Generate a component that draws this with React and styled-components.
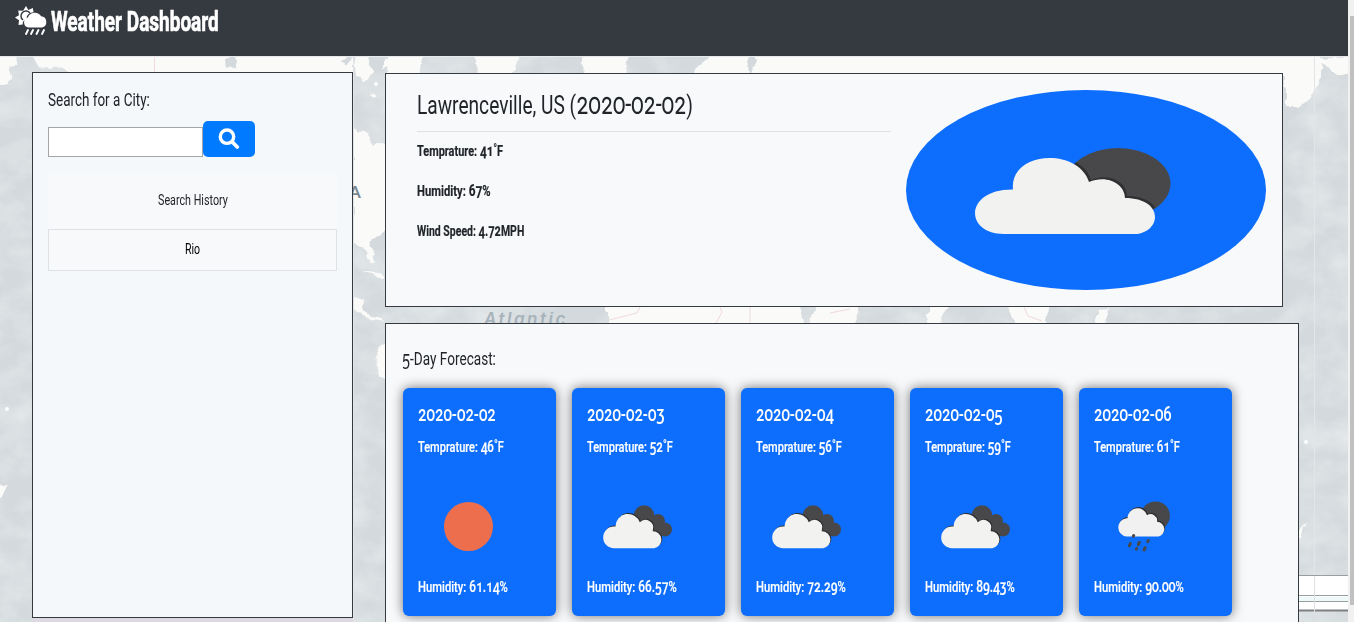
import React, { useLayoutEffect, useRef, useState } from "react";
import styled, { createGlobalStyle } from "styled-components";

const Global = createGlobalStyle`
  *, *::before, *::after { box-sizing: border-box; }
  html, body { margin: 0; height: 100%; overflow: hidden; }
  body { font-family: Roboto, "Liberation Sans", sans-serif; color: #212529; font-variant-numeric: oldstyle-nums; }
`;

const Page = styled.div`
  position: relative;
  height: 622px;
  display: flex;
  overflow: hidden;
  background: #d5dbde;
`;

const MapArt = styled.svg`
  position: absolute;
  left: 0;
  top: 56px;
  width: 1348px;
  height: 566px;
`;

const Content = styled.div`
  position: relative;
  width: 1348px;
  display: flex;
  flex-direction: column;
`;

const Header = styled.header`
  flex: none;
  height: 56px;
  background: #343a40;
  color: #fff;
  display: flex;
  align-items: flex-start;
  padding: 5px 0 0 15px;
  gap: 3px;
`;

const Columns = styled.main`
  display: flex;
  align-items: flex-start;
  gap: 32px;
  padding: 16px 0 0 32px;
`;

const Sidebar = styled.aside`
  width: 321px;
  height: 546px;
  border: 1px solid #343a40;
  background: #f4f8fb;
  padding: 15px;
`;

const SearchRow = styled.div`
  display: flex;
  align-items: flex-end;
  height: 36px;
  margin-top: 9px;
`;

const SearchInput = styled.input`
  width: 155px;
  height: 30px;
  border: 1px solid #a5a5a5;
  background: #fff;
  padding: 0 4px;
`;

const SearchButton = styled.button`
  width: 52px;
  height: 36px;
  border: 0;
  border-radius: 5px;
  background: #007bff;
  display: flex;
  align-items: center;
  justify-content: center;
  padding: 0;
`;

const History = styled.section`
  margin-top: 15px;
  background: #f8f9fb;
`;

const HistoryCell = styled.div`
  height: ${(p) => (p.$item ? 42 : 57)}px;
  border: ${(p) => (p.$item ? "1px solid #dee2e6" : "0")};
  color: ${(p) => (p.$item ? "#000" : "#212529")};
  display: flex;
  justify-content: center;
  padding-top: ${(p) => (p.$item ? 9 : 18)}px;
`;

const Main = styled.div`
  padding-top: 1px;
  display: flex;
  flex-direction: column;
  gap: 16px;
`;

const Current = styled.section`
  width: 898px;
  height: 234px;
  border: 1px solid #343a40;
  background: #f8f9fb;
  padding: 16px 16px 16px 31px;
  display: flex;
  gap: 15px;
`;

const Details = styled.div`
  width: 474px;
`;

const CityRow = styled.div`
  height: 42px;
  border-bottom: 1px solid #dfe1e4;
  margin-bottom: 7px;
`;

const Stat = styled.div`
  height: 40px;
`;

const Oval = styled.div`
  width: 360px;
  height: 200px;
  border-radius: 50%;
  background: #0d6efd;
`;

const Forecast = styled.section`
  width: 914px;
  height: 330px;
  border: 1px solid #343a40;
  background: #f8f9fb;
  padding: 23px 16px 0;
`;

const Cards = styled.div`
  display: flex;
  gap: 16px;
  margin: 17px 0 0 1px;
`;

const Card = styled.article`
  width: 153px;
  height: 228px;
  border-radius: 6px;
  background: #0d6efd;
  color: #fff;
  box-shadow: 0 0 12px rgba(0, 0, 0, 0.55);
  padding: 15px 15px;
`;

const CardIcon = styled.svg`
  display: block;
  width: 100px;
  height: 100px;
  margin: 8px 0 2px 1px;
`;

const Scrollbar = styled.div`
  width: 6px;
  background: #f1f1f1;
  overflow: hidden;
  padding: 16px 0 17px 2px;
`;

const Thumb = styled.div`
  height: 589px;
  background: #c1c1c1;
`;

const FitBox = styled.div`
  width: ${(p) => p.$w}px;
  height: ${(p) => p.$lh}px;
  line-height: ${(p) => p.$lh}px;
  font-size: ${(p) => p.$size}px;
  font-weight: ${(p) => p.$weight};
  -webkit-text-stroke: ${(p) => p.$stroke}px currentColor;
  white-space: nowrap;
`;

const FitInner = styled.span`
  display: inline-block;
  transform-origin: 0 50%;
`;

const Num = styled.span`
  font-size: ${(p) => p.$em || 1.06}em;
  line-height: 1px;
`;

/* Condenses a line of text horizontally to the given width. */
function Fit({ w, size, lh, weight = 400, stroke = 0, children }) {
  const ref = useRef(null);
  const [scale, setScale] = useState(1);
  useLayoutEffect(() => {
    const measure = () => setScale(w / ref.current.offsetWidth);
    measure();
    document.fonts?.ready.then(() => ref.current && measure());
  }, [w, size, weight]);
  return (
    <FitBox $w={w} $size={size} $lh={lh} $weight={weight} $stroke={stroke}>
      <FitInner ref={ref} style={{ transform: `scaleX(${scale})` }}>{children}</FitInner>
    </FitBox>
  );
}

const cloud = "M25.500 71.200a10.800 10.800 0 0 1 0-21.600h1.500a12.500 12.500 0 0 1 24.300-4.300 7.800 7.800 0 0 1 13 7.800v1.200a8.500 8.500 0 0 1 1.400 16.900z";

function WeatherIcon({ kind }) {
  if (kind === "sun") return <circle cx="49.500" cy="49.500" r="24.500" fill="#ec6e4c" />;
  if (kind === "rain")
    return (
      <g transform="translate(-2.500 -.5)">
        <circle cx="63" cy="39.300" r="14.400" fill="#48484a" />
        <path d="M34 59.500a9.200 9.200 0 0 1 0-18.300h1a10 10 0 0 1 19.500-3 6.500 6.500 0 0 1 10 6.500 7.500 7.500 0 0 1 1.500 14.800z" transform="translate(.8 -.8)" fill="#303033" />
        <path d="M34 60a9.200 9.200 0 0 1 0-18.300h1a10 10 0 0 1 19.500-3 6.500 6.500 0 0 1 10 6.500 7.500 7.500 0 0 1 1.500 14.800z" fill="#f1f1f1" />
        <path
          d="M41.200 59l-.4.800M37.900 67l-1 2.200M46.800 65.800l-1 2.400M55.800 64l-.6 1.200M44.200 72l-.4.600M52.700 71.300l-1.200 2.200"
          stroke="#48484a"
          strokeWidth="3"
          strokeLinecap="round"
        />
      </g>
    );
  return (
    <g>
      <g fill="#48484a">
        <circle cx="56" cy="38.500" r="10.200" />
        <circle cx="70" cy="44" r="7" />
        <circle cx="77" cy="52.500" r="7" />
        <path d="M50 40h22l6 19H62z" />
      </g>
      <path d={cloud} transform="translate(1.500 -1)" fill="#303033" />
      <path d={cloud} transform="translate(.5 0)" fill="#f2f2f0" />
    </g>
  );
}

const Logo = () => (
  <svg width="33" height="32" viewBox="0 0 33 32">
    <path fill="#fff" d="M11 1l2.300 4 4.500-2.100.8 4.300C14 7.500 11.500 10 11.600 14 8.500 15 7.500 17 7.700 19.500L3.500 20l.5-4.700L0 12.500l4-2.300L3.200 5.500l4.900.2z" />
    <path d="M8 15a5 5 0 1 1 7-7" fill="none" stroke="#343a40" strokeWidth="1.500" />
    <path fill="#fff" d="M13.500 22.500a5.100 5.100 0 0 1-.6-10 7.300 7.300 0 0 1 13.200-1.200 5.700 5.700 0 0 1 .9 11.200z" />
    <path d="M13 25l-2 4M18 25l-2 4M23.500 25l-2 4M29 25l-2 4" stroke="#fff" strokeWidth="1.900" strokeLinecap="round" />
  </svg>
);

const Background = () => (
  <MapArt viewBox="0 56 1348 566">
    <defs>
      <filter id="grain" x="0" y="0" width="100%" height="100%">
        <feTurbulence type="fractalNoise" baseFrequency=".03 .04" numOctaves="5" seed="8" />
        <feColorMatrix values="0 0 0 0 .91  0 0 0 0 .93  0 0 0 0 .95  1.400 0 0 0 -.45" />
      </filter>
      <filter id="coast" x="0" y="0" width="100%" height="100%">
        <feTurbulence type="fractalNoise" baseFrequency=".08" numOctaves="3" seed="3" />
        <feDisplacementMap in="SourceGraphic" scale="9" xChannelSelector="R" yChannelSelector="G" />
      </filter>
    </defs>
    <rect y="56" width="1348" height="566" fill="#d3d9dc" />
    <rect y="56" width="1348" height="566" filter="url(#grain)" opacity=".6" />
    <g filter="url(#coast)">
      <path fill="none" d="M0 40h1348v600H0z" />
      <g fill="#fafaf8">
        <path d="M-8 48h26l-2 16-7 5 4 9-3 6-18 2zM34 48h319v28H90l-8-6-12 3-10-7-14 5-11-7z" />
        <path d="M353 48h9l12 24-6 4-4 6-8-7zM383 59l9-1 10 7-8 5-11-2zM370 93q4-5 8 2-4 4-8-2zM353 128l13 4 8 14 14-5v90l-12 6-4 8 3 18-8-4-4-13-10-4zM353 297l11 3-1 10 9 7 11 2v4l-14-3-9-7-7-4zM390 338l-16 17 3 12 14 20zM360 271l20 1 5 4-2 2z" />
        <path d="M387 48h38l-5 28h-33zM475 48h46l-10 28h-34zM585 48h42l-2 28h-42zM690 76l14-12 14-16h604v30l-8 16-14 13h-14V76z" />
        <path d="M606 300h194l6 28H606zM818 300h46l-12 28h-44zM928 300h20l-8 28h-12zM1004 300h46l-6 28h-28zM1099 309l8-1-2 20h-9zM1312 60l40-4v16l-16 3-14-11zM1299 531l9-6-5 11-4 4zM-6 484l15-1-9 17z" />
      </g>
      <g fill="#d3d9dc">
        <path d="M225 60l9-5 3 9-11 4zM340 62l13-6-6 9zM746 60q8-10 12 2l-9 11z" />
        <circle cx="232" cy="62" r="3" />
      </g>
    </g>
    <path d="M154.500 56v16M640 307l-3 6-28 7M720 307l2 5-6 11M750 307v16M830 313l20-4M1024 307l4 9 14 5" stroke="#f0dadc" fill="none" />
    <rect y="618" x="32" width="321" height="4" fill="#ded8e2" />
    <g fill="#fff" opacity=".9">
      <circle cx="7" cy="409" r="2" /><circle cx="1306" cy="442" r="2" /><circle cx="376" cy="84" r="2" />
    </g>
    <path d="M1314.500 56v566M353.500 56v566" stroke="#e3e5e9" />
    <path d="M0 56.500h1348" stroke="#e6e8eb" />
    <text x="349" y="198" fontFamily="Lato, sans-serif" fontSize="17" fontWeight="700" fill="#7b8995">A</text>
    <text x="484" y="325" fontFamily="Inter, sans-serif" fontSize="17" fontStyle="italic" fontWeight="600" letterSpacing="2.500" fill="#a7b3bb">Atlantic</text>
    <rect x="1299" y="576" width="49" height="35" fill="#fff" />
    <path d="M1299 575.500h49M1299 595.500h49M1299 601.500h49" stroke="#999f9f" />
    <path d="M1299 610.500h49" stroke="#7c8082" strokeWidth="2" />
    <rect x="1299" y="597" width="49" height="4" fill="#eefafa" />
    <path d="M1314.500 576v46" stroke="#dde0e5" />
  </MapArt>
);

const days = [
  ["2020-02-02", "46", "61.14", "sun"],
  ["2020-02-03", "52", "66.57", "clouds"],
  ["2020-02-04", "56", "72.29", "clouds"],
  ["2020-02-05", "59", "89.43", "clouds"],
  ["2020-02-06", "61", "90.00", "rain"],
];

export default function App() {
  return (
    <Page>
      <Global />
      <Background />
      <Content>
        <Header>
          <Logo />
          <Fit w={168} size={28.5} lh={34} weight={700} stroke={0.7}>Weather Dashboard</Fit>
        </Header>
        <Columns>
          <Sidebar>
            <Fit w={102} size={18.5} lh={24}>Search for a City:</Fit>
            <SearchRow>
              <SearchInput aria-label="City" />
              <SearchButton aria-label="Search">
                <svg width="22" height="22" viewBox="0 0 22 22" fill="none" stroke="#fff">
                  <circle cx="9" cy="8.700" r="6.700" strokeWidth="3.400" />
                  <path d="M14.300 14l5 5" strokeWidth="3.800" strokeLinecap="round" />
                </svg>
              </SearchButton>
            </SearchRow>
            <History>
              <HistoryCell><Fit w={70} size={15.5} lh={20}>Search History</Fit></HistoryCell>
              <HistoryCell $item><Fit w={15} size={15.5} lh={20}>Rio</Fit></HistoryCell>
            </History>
          </Sidebar>
          <Main>
            <Current>
              <Details>
                <CityRow><Fit w={276} size={26} lh={30}>Lawrenceville, US (<Num $em={1.14}>2020-02-02</Num>)</Fit></CityRow>
                <Stat><Fit w={86} size={15.5} lh={24} weight={700} stroke={0.2}>Temprature: <Num>41˚</Num>F</Fit></Stat>
                <Stat><Fit w={74} size={15.5} lh={24} weight={700} stroke={0.2}>Humidity: <Num>67</Num>%</Fit></Stat>
                <Stat><Fit w={107} size={15.5} lh={24} weight={700} stroke={0.2}>Wind Speed: <Num>4.72</Num>MPH</Fit></Stat>
              </Details>
              <Oval>
                <svg width="360" height="200" viewBox="0 0 360 200">
                  <clipPath id="moon"><ellipse cx="212" cy="93.500" rx="52.500" ry="35.500" /></clipPath>
                  <ellipse cx="212" cy="93.500" rx="52.500" ry="35.500" fill="#48484a" />
                  <path d="M98 144C58 144 58 99 107 99.500C103 61 172 57 183 92C201 84 219 94 219 108C239 108 249 117 249 127C249 136 240 144 229 144Z" transform="translate(2 -2)" fill="#303033" clipPath="url(#moon)" />
                  <path d="M98 144C58 144 58 99 107 99.500C103 61 172 57 183 92C201 84 219 94 219 108C239 108 249 117 249 127C249 136 240 144 229 144Z" fill="#f2f2f0" />
                </svg>
              </Oval>
            </Current>
            <Forecast>
              <Fit w={94} size={18.5} lh={24}><Num>5</Num>-Day Forecast:</Fit>
              <Cards>
                {days.map(([date, temp, humidity, kind]) => (
                  <Card key={date}>
                    <Fit w={78} size={21} lh={23} weight={500}>{date}</Fit>
                    <Fit w={86} size={15.5} lh={43} weight={500} stroke={0.2}>Temprature: <Num>{temp}˚</Num>F</Fit>
                    <CardIcon viewBox="0 0 100 100"><WeatherIcon kind={kind} /></CardIcon>
                    <Fit w={90} size={15.5} lh={16} weight={500} stroke={0.2}>Humidity: <Num>{humidity}</Num>%</Fit>
                  </Card>
                ))}
              </Cards>
            </Forecast>
          </Main>
        </Columns>
      </Content>
      <Scrollbar>
        <Thumb />
      </Scrollbar>
    </Page>
  );
}
